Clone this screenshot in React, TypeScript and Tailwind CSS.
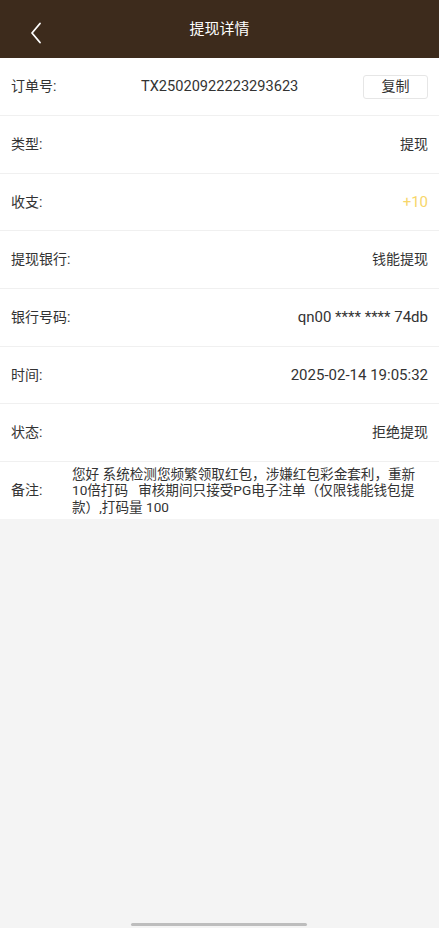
const ROWS: { label: string; value: string; cls?: string }[] = [
  { label: "类型:", value: "提现" },
  { label: "收支:", value: "+10", cls: "text-[15px] text-[#f7d66a]" },
  { label: "提现银行:", value: "钱能提现" },
  { label: "银行号码:", value: "qn00 **** **** 74db", cls: "text-[15px]" },
  { label: "时间:", value: "2025-02-14 19:05:32", cls: "text-[15px]" },
  { label: "状态:", value: "拒绝提现" },
];

export default function App() {
  return (
    <div
      className="relative min-h-[928px] w-full bg-[#f4f4f4] text-[#333]"
      style={{ fontFamily: 'Roboto, "Noto Sans CJK SC", sans-serif' }}
    >
      <div className="relative flex h-[58px] items-center justify-center bg-[#3d2b1c]">
        <button className="absolute left-[26px] top-[17px] p-1">
          <svg width="12" height="24" viewBox="0 0 12 24" fill="none">
            <path
              d="M10 2.5 L2 12 L10 21.5"
              stroke="#fff"
              strokeWidth="1.8"
              strokeLinecap="round"
              strokeLinejoin="round"
            />
          </svg>
        </button>
        <span className="text-[15px] text-white">提现详情</span>
      </div>

      <div className="bg-white">
        <div className="flex h-[58px] items-center border-b border-[#f0f0f0] pl-[11px] pr-[11px] text-[14px]">
          <span className="w-[130px] shrink-0">订单号:</span>
          <span className="flex-1 text-[14.6px]">TX25020922223293623</span>
          <button className="flex h-[24px] w-[65px] items-center justify-center rounded-[3px] border border-[#e6e6e6] text-[14px] text-[#333]">
            复制
          </button>
        </div>
        {ROWS.map((row, i) => (
          <div
            key={i}
            className="flex h-[57.7px] items-center justify-between border-b border-[#f0f0f0] px-[11px] text-[14px]"
          >
            <span>{row.label}</span>
            <span className={row.cls ?? ""}>{row.value}</span>
          </div>
        ))}
        <div className="flex h-[57px] items-center px-[11px] text-[14px]">
          <span className="w-[61px] shrink-0">备注:</span>
          <p className="text-[13.6px] leading-[16.5px] pr-[5px]">
            您好 系统检测您频繁领取红包，涉嫌红包彩金套利，重新10倍打码&nbsp;&nbsp;&nbsp;审核期间只接受PG电子注单（仅限钱能钱包提款）,打码量 100
          </p>
        </div>
      </div>

      <div className="absolute bottom-[2px] left-[131px] h-[3px] w-[176px] rounded-full bg-[#bdbdbd]" />
    </div>
  );
}
